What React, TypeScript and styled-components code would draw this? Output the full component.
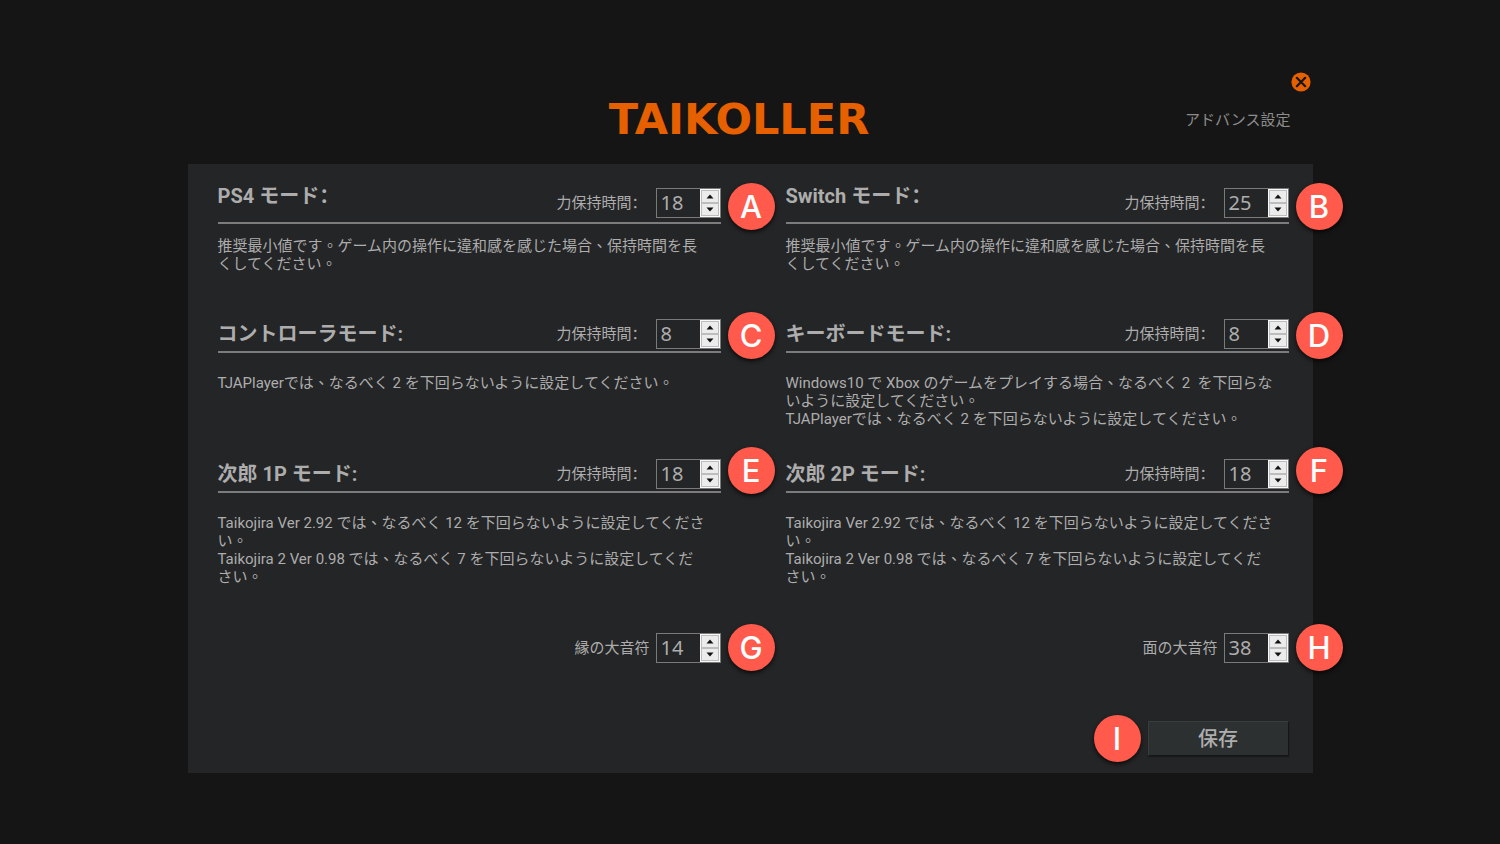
import React, { useId, useState } from "react";
import styled, { createGlobalStyle } from "styled-components";

const ink = "#adadad";

const GlobalStyle = createGlobalStyle`
  *, *::before, *::after { box-sizing: border-box; }
  body {
    margin: 0;
    background: #151515;
    color: ${ink};
    font-family: Roboto, "Noto Sans CJK SC", sans-serif;
    font-size: 15px;
    line-height: 18px;
  }
  button, input { font: inherit; color: inherit; }
`;

const Page = styled.main`
  padding: 72px 12.5% 70px;
`;

const TopBar = styled.div`
  display: flex;
  justify-content: flex-end;
  padding-right: 2px;
`;

const CloseButton = styled.button`
  display: block;
  width: 20px;
  height: 20px;
  padding: 0;
  border: 0;
  background: none;
  cursor: pointer;
`;

const Header = styled.header`
  display: grid;
  grid-template-columns: 1fr auto 1fr;
  align-items: center;
  height: 54px;
  margin-bottom: 18px;
  padding-right: 22px;
`;

const Logo = styled.h1`
  grid-column: 2;
  margin: 0;
  color: #e66000;
  font-family: "DejaVu Sans", sans-serif;
  font-size: 43px;
  font-weight: 700;
  line-height: 52px;
`;

const PageName = styled.span`
  justify-self: end;
  padding-top: 2px;
  color: #8c8c8c;
`;

const Panel = styled.form`
  padding: 24px 24px 17px 30px;
  background: #242526;
`;

const Row = styled.div<{ $space: number }>`
  display: grid;
  grid-template-columns: 1fr 1fr;
  column-gap: 65px;
  margin-bottom: ${(p) => p.$space}px;
`;

const SectionHead = styled.div<{ $raised?: boolean }>`
  display: flex;
  align-items: ${(p) => (p.$raised ? "flex-start" : "center")};
  justify-content: space-between;
  padding-bottom: ${(p) => (p.$raised ? 4 : 2)}px;
  border-bottom: 2px solid #7c7c7c;
`;

const SectionTitle = styled.h2<{ $raised?: boolean }>`
  margin: 0;
  font-size: 20px;
  font-weight: 700;
  line-height: ${(p) => (p.$raised ? 16 : 26)}px;
`;

const Hint = styled.p<{ $gap: number }>`
  margin: ${(p) => p.$gap}px 0 0;
  font-family: Roboto, "Noto Sans CJK TC", sans-serif;
  white-space: pre;
`;

const FieldBox = styled.div<{ $gap: number }>`
  position: relative;
  display: flex;
  align-items: center;
  justify-content: flex-end;
  gap: ${(p) => p.$gap}px;
`;

const Spinner = styled.div`
  display: flex;
  width: 65px;
  height: 30px;
  border: 1px solid #7a7a7a;
`;

const NumberInput = styled.input`
  flex: 1;
  min-width: 0;
  padding: 0 4px 2px;
  border: 0;
  outline: 0;
  background: transparent;
  font-size: 20px;
  font-family: "Noto Sans", sans-serif;
`;

const Arrows = styled.div`
  display: flex;
  flex-direction: column;
  width: 20px;
  padding: 1px;
  background: #fafafa;
`;

const ArrowButton = styled.button`
  display: flex;
  flex: 1;
  align-items: center;
  justify-content: center;
  padding: 0;
  border: 1px solid #bdbdbd;
  background: #ececec;
`;

const Marker = styled.span<{ $side: "left" | "right"; $drop?: number }>`
  position: absolute;
  top: calc(50% - 24px + ${(p) => p.$drop ?? 0}px);
  ${(p) => (p.$side === "right" ? "left" : "right")}: calc(100% + 7px);
  width: 47px;
  height: 47px;
  border-radius: 50%;
  background: #ff5a4c;
  box-shadow: 0 2px 4px rgba(0, 0, 0, 0.75);
  color: #fff;
  font-family: Inter, "Liberation Sans", sans-serif;
  font-size: 31px;
  font-weight: 500;
  line-height: 48px;
  text-align: center;
`;

const Footer = styled.div`
  display: flex;
  justify-content: flex-end;
`;

const SaveBox = styled.div`
  position: relative;
`;

const SaveButton = styled.button`
  display: block;
  width: 141px;
  height: 35px;
  padding: 0;
  border: 1px solid;
  border-color: #3a3d3d #151616 #151616 #3a3d3d;
  background: #2c3031;
  font-size: 20px;
  font-weight: 500;
  box-shadow: 0 1px 1px #191a1a;
`;

type FieldProps = {
  label: string;
  initial: number;
  mark: string;
  gap?: number;
  markDrop?: number;
};

function Field({ label, initial, mark, gap = 9, markDrop = 0 }: FieldProps) {
  const id = useId();
  const [value, setValue] = useState(initial);
  return (
    <FieldBox $gap={gap}>
      <label htmlFor={id}>{label}</label>
      <Spinner>
        <NumberInput
          id={id}
          inputMode="numeric"
          value={value}
          onChange={(e) => setValue(Number(e.target.value) || 0)}
        />
        <Arrows>
          <ArrowButton type="button" aria-label="+1" onClick={() => setValue(value + 1)}>
            <svg width="8" height="5" viewBox="0 0 8 5">
              <path d="M0.5 4.5 4 0.5 7.5 4.5Z" fill="#111" />
            </svg>
          </ArrowButton>
          <ArrowButton type="button" aria-label="-1" onClick={() => setValue(Math.max(0, value - 1))}>
            <svg width="8" height="5" viewBox="0 0 8 5">
              <path d="M0.5 0.5 4 4.5 7.5 0.5Z" fill="#111" />
            </svg>
          </ArrowButton>
        </Arrows>
      </Spinner>
      <Marker $side="right" $drop={markDrop}>{mark}</Marker>
    </FieldBox>
  );
}

type Mode = { title: string; value: number; mark: string; hint: string };

const minimumHint =
  "推奨最小値です。ゲーム内の操作に違和感を感じた場合、保持時間を長\nくしてください。";
const jiroHint =
  "Taikojira Ver 2.92 では、なるべく 12 を下回らないように設定してくださ\nい。\nTaikojira 2 Ver 0.98 では、なるべく 7 を下回らないように設定してくだ\nさい。";

const rows: { space: number; markDrop: number; raised?: boolean; modes: Mode[] }[] = [
  {
    space: 46,
    markDrop: 4,
    raised: true,
    modes: [
      { title: "PS4 モード：", value: 18, mark: "A", hint: minimumHint },
      { title: "Switch モード：", value: 25, mark: "B", hint: minimumHint },
    ],
  },
  {
    space: 31,
    markDrop: 2,
    modes: [
      {
        title: "コントローラモード:",
        value: 8,
        mark: "C",
        hint: "TJAPlayerでは、なるべく 2 を下回らないように設定してください。",
      },
      {
        title: "キーボードモード:",
        value: 8,
        mark: "D",
        hint: "Windows10 で Xbox のゲームをプレイする場合、なるべく 2  を下回らな\nいように設定してください。\nTJAPlayerでは、なるべく 2 を下回らないように設定してください。",
      },
    ],
  },
  {
    space: 47,
    markDrop: -3,
    modes: [
      { title: "次郎 1P モード:", value: 18, mark: "E", hint: jiroHint },
      { title: "次郎 2P モード:", value: 18, mark: "F", hint: jiroHint },
    ],
  },
];

export default function App() {
  return (
    <Page>
      <GlobalStyle />
      <TopBar>
        <CloseButton type="button" aria-label="閉じる">
          <svg width="20" height="20" viewBox="0 0 20 20">
            <circle cx="10" cy="10" r="9.6" fill="#e66000" />
            <path d="M5.8 5.8 14.2 14.2M14.2 5.8 5.8 14.2" stroke="#151515" strokeWidth="2.2" strokeLinecap="round" />
          </svg>
        </CloseButton>
      </TopBar>
      <Header>
        <Logo>TAIKOLLER</Logo>
        <PageName>アドバンス設定</PageName>
      </Header>
      <Panel onSubmit={(e) => e.preventDefault()}>
        {rows.map((row) => (
          <Row key={row.modes[0].mark} $space={row.space}>
            {row.modes.map((mode) => (
              <section key={mode.mark}>
                <SectionHead $raised={row.raised}>
                  <SectionTitle $raised={row.raised}>{mode.title}</SectionTitle>
                  <Field
                    label="力保持時間："
                    initial={mode.value}
                    mark={mode.mark}
                    markDrop={row.markDrop}
                  />
                </SectionHead>
                <Hint $gap={row.raised ? 13 : 21}>{mode.hint}</Hint>
              </section>
            ))}
          </Row>
        ))}
        <Row $space={58}>
          <Field label="縁の大音符" initial={14} mark="G" gap={6} />
          <Field label="面の大音符" initial={38} mark="H" gap={6} />
        </Row>
        <Footer>
          <SaveBox>
            <SaveButton type="submit">保存</SaveButton>
            <Marker $side="left">I</Marker>
          </SaveBox>
        </Footer>
      </Panel>
    </Page>
  );
}
